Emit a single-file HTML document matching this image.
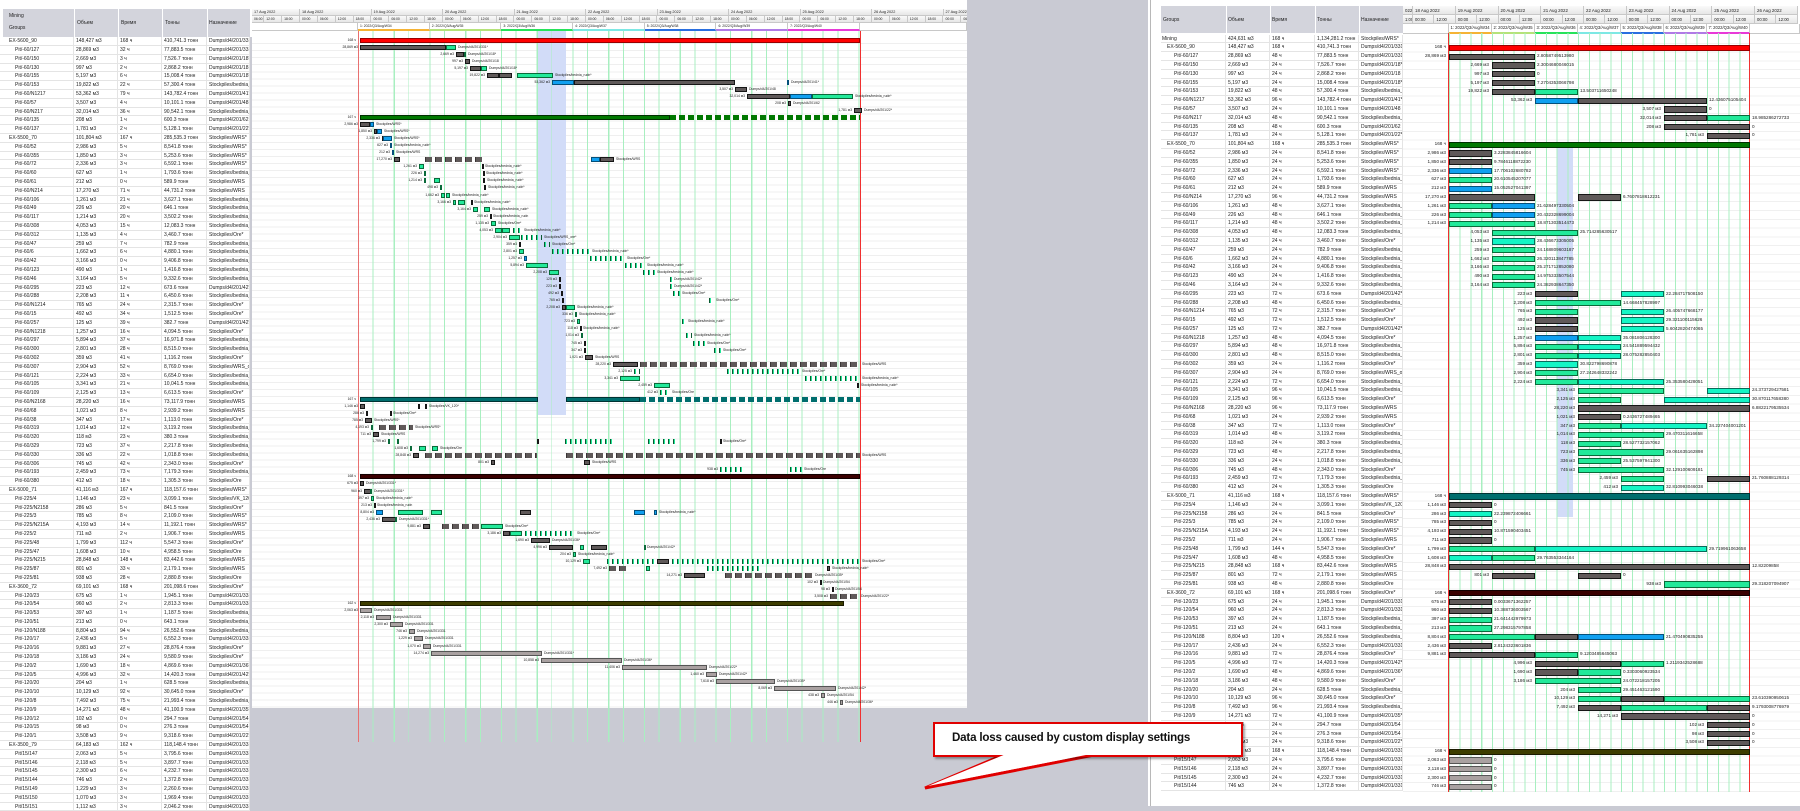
<!DOCTYPE html>
<html><head><meta charset="utf-8">
<style>
body{margin:0;width:1800px;height:806px;background:#c9cad3;position:relative;overflow:hidden;font-family:"Liberation Sans","Noto Sans CJK SC",sans-serif;font-size:5px;color:#222}
.a{position:absolute}
i{font-style:normal}
.lt{position:absolute;left:0;top:37.3px;width:250px;background:#fff}
.lt>div{display:grid;grid-template-columns:74px 44px 44px 45px 43px;height:8.8px;box-sizing:border-box;border-bottom:1px solid #e4e4e4}
.lt i,.rt .t i{line-height:8px;padding-left:2px;border-right:1px solid #e4e4e4;overflow:hidden;white-space:nowrap}
.lt i:first-child{padding-left:15px}
.lt .gr i:first-child{padding-left:9px}
.rt{position:absolute;left:0;top:34.6px;width:1800px}
.rt>div{position:relative;height:8.8px}
.rt .t{position:absolute;left:1161px;top:0;width:242px;height:8.8px;display:grid;grid-template-columns:65px 44px 45px 44px 44px;box-sizing:border-box;border-bottom:1px solid #e4e4e4;background:#fff}
.rt .t i:first-child{padding-left:13px}
.rt .gr .t i:first-child{padding-left:6px}
.rt .m .t i:first-child{padding-left:1px}
b{position:absolute;box-sizing:border-box;border:1px solid #161616}
.rt b{top:1.4px;height:6.2px}
.lg{position:absolute;left:0;top:36.5px;width:967px;height:672px;overflow:hidden}
.lg>div{position:relative;height:7.06px}
.lg b{top:1px;height:5px}
.v{position:absolute;transform:translateX(-100%);white-space:nowrap;top:0}
.n{position:absolute;white-space:nowrap;top:0}
.lg .v,.lg .n{font-size:3.4px;line-height:7px}
.rt .v,.rt .n{font-size:4.6px;line-height:8.8px}
.R{background:#f00;border-color:#900}
.G{background:#007800;border-color:#003000}
.T{background:#006e6e;border-color:#003333}
.M{background:#3a0000;border-color:#100}
.O{background:#3d3d00;border-color:#1a1a00}
.k{background:#5f5959}
.g{background:#22e99a;border-color:#0a6a3a}
.c{background:#14f5c5;border-color:#0a6a5a}
.u{background:#10a0f0;border-color:#05507a}
.l{background:#a9a1a1;border-color:#555}
.d{background:repeating-linear-gradient(90deg,#0a5a30 0 1px,#22e99a 1px 2px,transparent 2px 5px);border:none}
.sk{background:repeating-linear-gradient(90deg,#3a3535 0 1px,#5f5959 1px 7px,transparent 7px 10px);border:none}
.Gd{background:repeating-linear-gradient(90deg,#007800 0 6px,transparent 6px 9px);border:none}
.Td{background:repeating-linear-gradient(90deg,#006e6e 0 6px,transparent 6px 9px);border:none}
.hd{background:#d3d4dc}
.cells{display:flex;position:absolute;white-space:nowrap;overflow:hidden}
.cells span{flex:none;box-sizing:border-box;border-right:1px solid #c8c8c8;border-bottom:1px solid #c8c8c8;padding-left:2px;background:linear-gradient(#fafafa,#e6e6e6);overflow:hidden}
.wk span{background:#fff}
</style></head><body>

<div class="a" style="left:0;top:0;width:967px;height:9px;background:#fff"></div>
<div class="a" style="left:0;top:9px;width:252px;height:28.3px;background:#fff"></div>
<div class="a hd" style="left:3px;top:9px;width:247px;height:28px"></div>
<div class="a" style="left:9px;top:13px">Mining</div>
<div class="a" style="left:9px;top:25px">Groups</div>
<div class="a" style="left:77px;top:20px">Объем</div>
<div class="a" style="left:121px;top:20px">Время</div>
<div class="a" style="left:165px;top:20px">Тонны</div>
<div class="a" style="left:209px;top:20px">Назначение</div>
<div class="a" style="left:74px;top:9px;width:1px;height:28px;background:#fff"></div>
<div class="a" style="left:118px;top:9px;width:1px;height:28px;background:#fff"></div>
<div class="a" style="left:162px;top:9px;width:1px;height:28px;background:#fff"></div>
<div class="a" style="left:207px;top:9px;width:1px;height:28px;background:#fff"></div>

<div class="a" style="left:252px;top:31px;width:715px;height:677px;background:#fff"></div>
<div class="a" style="left:252px;top:36.5px;width:715px;height:671px;background:repeating-linear-gradient(180deg,transparent 0 6.06px,#efefef 6.06px 7.06px)"></div>

<div class="cells" style="left:252px;top:9px;width:715px;height:7px;line-height:7px;font-size:3.8px">
<span style="width:48px">17 Aug 2022</span><span style="width:71.5px">18 Aug 2022</span><span style="width:71.5px">19 Aug 2022</span><span style="width:71.5px">20 Aug 2022</span><span style="width:71.5px">21 Aug 2022</span><span style="width:71.5px">22 Aug 2022</span><span style="width:71.5px">23 Aug 2022</span><span style="width:71.5px">24 Aug 2022</span><span style="width:71.5px">25 Aug 2022</span><span style="width:71.5px">26 Aug 2022</span><span style="width:71.5px">27 Aug 2022</span></div>
<div class="cells" style="left:252px;top:16px;width:715px;height:7px;line-height:7px;font-size:3.4px">
<span style="width:12.2px">06:00</span><span style="width:17.875px">12:00</span><span style="width:17.875px">18:00</span><span style="width:17.875px">00:00</span><span style="width:17.875px">06:00</span><span style="width:17.875px">12:00</span><span style="width:17.875px">18:00</span><span style="width:17.875px">00:00</span><span style="width:17.875px">06:00</span><span style="width:17.875px">12:00</span><span style="width:17.875px">18:00</span><span style="width:17.875px">00:00</span><span style="width:17.875px">06:00</span><span style="width:17.875px">12:00</span><span style="width:17.875px">18:00</span><span style="width:17.875px">00:00</span><span style="width:17.875px">06:00</span><span style="width:17.875px">12:00</span><span style="width:17.875px">18:00</span><span style="width:17.875px">00:00</span><span style="width:17.875px">06:00</span><span style="width:17.875px">12:00</span><span style="width:17.875px">18:00</span><span style="width:17.875px">00:00</span><span style="width:17.875px">06:00</span><span style="width:17.875px">12:00</span><span style="width:17.875px">18:00</span><span style="width:17.875px">00:00</span><span style="width:17.875px">06:00</span><span style="width:17.875px">12:00</span><span style="width:17.875px">18:00</span><span style="width:17.875px">00:00</span><span style="width:17.875px">06:00</span><span style="width:17.875px">12:00</span><span style="width:17.875px">18:00</span><span style="width:17.875px">00:00</span><span style="width:17.875px">06:00</span><span style="width:17.875px">12:00</span><span style="width:17.875px">18:00</span><span style="width:17.875px">00:00</span><span style="width:17.875px">06:00</span></div>
<div class="cells wk" style="left:252px;top:23px;width:715px;height:8px;line-height:6px;font-size:3.4px">
<span style="width:106px"></span><span style="width:71.7px;border-bottom:2px solid #f5b335">1: 2022/Q3/Aug/W34</span><span style="width:71.7px;border-bottom:2px solid #b5e37a">2: 2022/Q3/Aug/W35</span><span style="width:71.7px;border-bottom:2px solid #27e35a">3: 2022/Q3/Aug/W36</span><span style="width:71.7px;border-bottom:2px solid #7de8e4">4: 2022/Q3/Aug/W37</span><span style="width:71.7px;border-bottom:2px solid #2a6fe0">5: 2022/Q3/Aug/W38</span><span style="width:71.7px;border-bottom:2px solid #b07be6">6: 2022/Q3/Aug/W39</span><span style="width:71.7px;border-bottom:2px solid #e83ad8">7: 2022/Q3/Aug/W40</span><span style="width:107px"></span></div>

<div class="a" style="left:538px;top:31px;width:28px;height:384px;background:#d2dcf8"></div>
<div class="a" style="left:358px;top:31px;width:503px;height:711px;background:repeating-linear-gradient(90deg,#a8efc0 0 1px,transparent 1px 14.5px,#a8efc0 14.5px 15.5px,transparent 15.5px 35.75px)"></div>
<div class="a" style="left:357.5px;top:31px;width:1px;height:711px;background:#e87070"></div>
<div class="a" style="left:859.5px;top:31px;width:1px;height:711px;background:#f03030"></div>

<div class="lt">
<div class="gr"><i>EX-5600_90</i><i>148,427 м3</i><i>168 ч</i><i>410,741.3 тонн</i><i>Dumps/d4/201/331</i></div>
<div><i>Pit/-60/127</i><i>28,869 м3</i><i>32 ч</i><i>77,883.5 тонн</i><i>Dumps/d4/201/331</i></div>
<div><i>Pit/-60/150</i><i>2,669 м3</i><i>3 ч</i><i>7,526.7 тонн</i><i>Dumps/d4/201/18*</i></div>
<div><i>Pit/-60/130</i><i>997 м3</i><i>2 ч</i><i>2,868.2 тонн</i><i>Dumps/d4/201/18</i></div>
<div><i>Pit/-60/155</i><i>5,197 м3</i><i>6 ч</i><i>15,008.4 тонн</i><i>Dumps/d4/201/18*</i></div>
<div><i>Pit/-60/153</i><i>19,822 м3</i><i>22 ч</i><i>57,300.4 тонн</i><i>Stockpiles/bednia_r</i></div>
<div><i>Pit/-60/N1217</i><i>53,362 м3</i><i>79 ч</i><i>143,782.4 тонн</i><i>Dumps/d4/201/41*</i></div>
<div><i>Pit/-60/57</i><i>3,507 м3</i><i>4 ч</i><i>10,101.1 тонн</i><i>Dumps/d4/201/48</i></div>
<div><i>Pit/-60/N217</i><i>32,014 м3</i><i>36 ч</i><i>90,542.1 тонн</i><i>Stockpiles/bednia_r</i></div>
<div><i>Pit/-60/135</i><i>208 м3</i><i>1 ч</i><i>600.3 тонн</i><i>Dumps/d4/201/62</i></div>
<div><i>Pit/-60/137</i><i>1,781 м3</i><i>2 ч</i><i>5,128.1 тонн</i><i>Dumps/d4/201/22*</i></div>
<div class="gr"><i>EX-5500_70</i><i>101,804 м3</i><i>167 ч</i><i>285,535.3 тонн</i><i>Stockpiles/WRS*</i></div>
<div><i>Pit/-60/52</i><i>2,986 м3</i><i>5 ч</i><i>8,541.8 тонн</i><i>Stockpiles/WRS*</i></div>
<div><i>Pit/-60/355</i><i>1,850 м3</i><i>3 ч</i><i>5,253.6 тонн</i><i>Stockpiles/WRS*</i></div>
<div><i>Pit/-60/72</i><i>2,336 м3</i><i>3 ч</i><i>6,592.1 тонн</i><i>Stockpiles/WRS*</i></div>
<div><i>Pit/-60/60</i><i>627 м3</i><i>1 ч</i><i>1,793.6 тонн</i><i>Stockpiles/bednia_r</i></div>
<div><i>Pit/-60/61</i><i>212 м3</i><i>0 ч</i><i>589.9 тонн</i><i>Stockpiles/WRS</i></div>
<div><i>Pit/-60/N214</i><i>17,270 м3</i><i>71 ч</i><i>44,731.2 тонн</i><i>Stockpiles/WRS</i></div>
<div><i>Pit/-60/106</i><i>1,261 м3</i><i>21 ч</i><i>3,627.1 тонн</i><i>Stockpiles/bednia_r</i></div>
<div><i>Pit/-60/49</i><i>226 м3</i><i>20 ч</i><i>646.1 тонн</i><i>Stockpiles/bednia_r</i></div>
<div><i>Pit/-60/117</i><i>1,214 м3</i><i>20 ч</i><i>3,502.2 тонн</i><i>Stockpiles/bednia_r</i></div>
<div><i>Pit/-60/308</i><i>4,053 м3</i><i>15 ч</i><i>12,083.3 тонн</i><i>Stockpiles/bednia_r</i></div>
<div><i>Pit/-60/312</i><i>1,135 м3</i><i>4 ч</i><i>3,460.7 тонн</i><i>Stockpiles/Ore*</i></div>
<div><i>Pit/-60/47</i><i>259 м3</i><i>7 ч</i><i>782.9 тонн</i><i>Stockpiles/bednia_r</i></div>
<div><i>Pit/-60/6</i><i>1,662 м3</i><i>6 ч</i><i>4,880.1 тонн</i><i>Stockpiles/bednia_r</i></div>
<div><i>Pit/-60/42</i><i>3,166 м3</i><i>0 ч</i><i>9,406.8 тонн</i><i>Stockpiles/bednia_r</i></div>
<div><i>Pit/-60/123</i><i>490 м3</i><i>1 ч</i><i>1,416.8 тонн</i><i>Stockpiles/bednia_r</i></div>
<div><i>Pit/-60/46</i><i>3,164 м3</i><i>5 ч</i><i>9,332.6 тонн</i><i>Stockpiles/bednia_r</i></div>
<div><i>Pit/-60/295</i><i>223 м3</i><i>12 ч</i><i>673.6 тонн</i><i>Dumps/d4/201/42*</i></div>
<div><i>Pit/-60/288</i><i>2,208 м3</i><i>11 ч</i><i>6,450.6 тонн</i><i>Stockpiles/bednia_r</i></div>
<div><i>Pit/-60/N1214</i><i>765 м3</i><i>24 ч</i><i>2,315.7 тонн</i><i>Stockpiles/Ore*</i></div>
<div><i>Pit/-60/15</i><i>492 м3</i><i>34 ч</i><i>1,512.5 тонн</i><i>Stockpiles/Ore*</i></div>
<div><i>Pit/-60/257</i><i>125 м3</i><i>39 ч</i><i>382.7 тонн</i><i>Dumps/d4/201/42*</i></div>
<div><i>Pit/-60/N1218</i><i>1,257 м3</i><i>16 ч</i><i>4,094.5 тонн</i><i>Stockpiles/Ore*</i></div>
<div><i>Pit/-60/297</i><i>5,894 м3</i><i>37 ч</i><i>16,971.8 тонн</i><i>Stockpiles/bednia_r</i></div>
<div><i>Pit/-60/300</i><i>2,801 м3</i><i>28 ч</i><i>8,515.0 тонн</i><i>Stockpiles/bednia_r</i></div>
<div><i>Pit/-60/302</i><i>359 м3</i><i>41 ч</i><i>1,116.2 тонн</i><i>Stockpiles/Ore*</i></div>
<div><i>Pit/-60/307</i><i>2,904 м3</i><i>52 ч</i><i>8,769.0 тонн</i><i>Stockpiles/WRS_ore</i></div>
<div><i>Pit/-60/121</i><i>2,224 м3</i><i>33 ч</i><i>6,654.0 тонн</i><i>Stockpiles/bednia_r</i></div>
<div><i>Pit/-60/105</i><i>3,341 м3</i><i>21 ч</i><i>10,041.5 тонн</i><i>Stockpiles/bednia_r</i></div>
<div><i>Pit/-60/109</i><i>2,125 м3</i><i>13 ч</i><i>6,613.5 тонн</i><i>Stockpiles/Ore*</i></div>
<div><i>Pit/-60/N2168</i><i>28,220 м3</i><i>16 ч</i><i>73,117.9 тонн</i><i>Stockpiles/WRS</i></div>
<div><i>Pit/-60/68</i><i>1,021 м3</i><i>8 ч</i><i>2,939.2 тонн</i><i>Stockpiles/WRS</i></div>
<div><i>Pit/-60/38</i><i>347 м3</i><i>17 ч</i><i>1,113.0 тонн</i><i>Stockpiles/Ore*</i></div>
<div><i>Pit/-60/319</i><i>1,014 м3</i><i>12 ч</i><i>3,119.2 тонн</i><i>Stockpiles/bednia_r</i></div>
<div><i>Pit/-60/320</i><i>118 м3</i><i>23 ч</i><i>380.3 тонн</i><i>Stockpiles/bednia_r</i></div>
<div><i>Pit/-60/329</i><i>723 м3</i><i>37 ч</i><i>2,217.8 тонн</i><i>Stockpiles/bednia_r</i></div>
<div><i>Pit/-60/330</i><i>336 м3</i><i>22 ч</i><i>1,018.8 тонн</i><i>Stockpiles/bednia_r</i></div>
<div><i>Pit/-60/306</i><i>745 м3</i><i>42 ч</i><i>2,343.0 тонн</i><i>Stockpiles/Ore*</i></div>
<div><i>Pit/-60/193</i><i>2,459 м3</i><i>73 ч</i><i>7,179.3 тонн</i><i>Stockpiles/bednia_r</i></div>
<div><i>Pit/-60/380</i><i>412 м3</i><i>18 ч</i><i>1,305.3 тонн</i><i>Stockpiles/Ore</i></div>
<div class="gr"><i>EX-5000_71</i><i>41,116 м3</i><i>167 ч</i><i>118,157.6 тонн</i><i>Stockpiles/WRS*</i></div>
<div><i>Pit/-225/4</i><i>1,146 м3</i><i>23 ч</i><i>3,099.1 тонн</i><i>Stockpiles/VK_120*</i></div>
<div><i>Pit/-225/N2158</i><i>286 м3</i><i>5 ч</i><i>841.5 тонн</i><i>Stockpiles/Ore*</i></div>
<div><i>Pit/-225/3</i><i>785 м3</i><i>8 ч</i><i>2,109.0 тонн</i><i>Stockpiles/WRS*</i></div>
<div><i>Pit/-225/N215A</i><i>4,193 м3</i><i>14 ч</i><i>11,192.1 тонн</i><i>Stockpiles/WRS*</i></div>
<div><i>Pit/-225/2</i><i>711 м3</i><i>2 ч</i><i>1,906.7 тонн</i><i>Stockpiles/WRS</i></div>
<div><i>Pit/-225/48</i><i>1,799 м3</i><i>112 ч</i><i>5,547.3 тонн</i><i>Stockpiles/Ore*</i></div>
<div><i>Pit/-225/47</i><i>1,608 м3</i><i>10 ч</i><i>4,958.5 тонн</i><i>Stockpiles/Ore</i></div>
<div><i>Pit/-225/N215</i><i>28,848 м3</i><i>148 ч</i><i>83,442.6 тонн</i><i>Stockpiles/WRS</i></div>
<div><i>Pit/-225/87</i><i>801 м3</i><i>33 ч</i><i>2,179.1 тонн</i><i>Stockpiles/WRS</i></div>
<div><i>Pit/-225/81</i><i>938 м3</i><i>28 ч</i><i>2,880.8 тонн</i><i>Stockpiles/Ore</i></div>
<div class="gr"><i>EX-3600_72</i><i>69,101 м3</i><i>168 ч</i><i>201,098.6 тонн</i><i>Stockpiles/Ore*</i></div>
<div><i>Pit/-120/23</i><i>675 м3</i><i>1 ч</i><i>1,945.1 тонн</i><i>Dumps/d4/201/331</i></div>
<div><i>Pit/-120/54</i><i>960 м3</i><i>2 ч</i><i>2,813.3 тонн</i><i>Dumps/d4/201/331</i></div>
<div><i>Pit/-120/53</i><i>397 м3</i><i>1 ч</i><i>1,187.5 тонн</i><i>Stockpiles/bednia_r</i></div>
<div><i>Pit/-120/51</i><i>213 м3</i><i>0 ч</i><i>643.1 тонн</i><i>Stockpiles/bednia_r</i></div>
<div><i>Pit/-120/N188</i><i>8,804 м3</i><i>94 ч</i><i>26,552.6 тонн</i><i>Stockpiles/bednia_r</i></div>
<div><i>Pit/-120/17</i><i>2,436 м3</i><i>5 ч</i><i>6,552.3 тонн</i><i>Dumps/d4/201/331</i></div>
<div><i>Pit/-120/16</i><i>9,881 м3</i><i>27 ч</i><i>28,876.4 тонн</i><i>Stockpiles/Ore*</i></div>
<div><i>Pit/-120/18</i><i>3,186 м3</i><i>24 ч</i><i>9,580.9 тонн</i><i>Stockpiles/Ore*</i></div>
<div><i>Pit/-120/2</i><i>1,690 м3</i><i>18 ч</i><i>4,869.6 тонн</i><i>Dumps/d4/201/36*</i></div>
<div><i>Pit/-120/5</i><i>4,996 м3</i><i>32 ч</i><i>14,420.3 тонн</i><i>Dumps/d4/201/42*</i></div>
<div><i>Pit/-120/20</i><i>204 м3</i><i>1 ч</i><i>628.5 тонн</i><i>Stockpiles/bednia_r</i></div>
<div><i>Pit/-120/10</i><i>10,129 м3</i><i>92 ч</i><i>30,645.0 тонн</i><i>Stockpiles/Ore*</i></div>
<div><i>Pit/-120/8</i><i>7,492 м3</i><i>75 ч</i><i>21,993.4 тонн</i><i>Stockpiles/bednia_r</i></div>
<div><i>Pit/-120/9</i><i>14,271 м3</i><i>48 ч</i><i>41,100.9 тонн</i><i>Dumps/d4/201/35*</i></div>
<div><i>Pit/-120/12</i><i>102 м3</i><i>0 ч</i><i>294.7 тонн</i><i>Dumps/d4/201/54</i></div>
<div><i>Pit/-120/15</i><i>98 м3</i><i>0 ч</i><i>276.3 тонн</i><i>Dumps/d4/201/54</i></div>
<div><i>Pit/-120/1</i><i>3,508 м3</i><i>9 ч</i><i>9,318.6 тонн</i><i>Dumps/d4/201/22*</i></div>
<div class="gr"><i>EX-3500_79</i><i>64,183 м3</i><i>162 ч</i><i>118,148.4 тонн</i><i>Dumps/d4/201/331</i></div>
<div><i>Pit/15/147</i><i>2,063 м3</i><i>5 ч</i><i>3,795.6 тонн</i><i>Dumps/d4/201/331</i></div>
<div><i>Pit/15/146</i><i>2,118 м3</i><i>5 ч</i><i>3,897.7 тонн</i><i>Dumps/d4/201/331</i></div>
<div><i>Pit/15/145</i><i>2,300 м3</i><i>6 ч</i><i>4,232.7 тонн</i><i>Dumps/d4/201/331</i></div>
<div><i>Pit/15/144</i><i>746 м3</i><i>2 ч</i><i>1,372.8 тонн</i><i>Dumps/d4/201/331</i></div>
<div><i>Pit/15/149</i><i>1,229 м3</i><i>3 ч</i><i>2,260.6 тонн</i><i>Dumps/d4/201/331</i></div>
<div><i>Pit/15/150</i><i>1,070 м3</i><i>3 ч</i><i>1,969.4 тонн</i><i>Dumps/d4/201/331</i></div>
<div><i>Pit/15/151</i><i>1,112 м3</i><i>3 ч</i><i>2,046.2 тонн</i><i>Dumps/d4/201/331</i></div>
</div>

<div class="lg">
<div><span class="v" style="left:356px">168 ч</span><b class="R" style="left:360px;width:500px"></b></div>
<div><span class="v" style="left:358px">28,869 м3</span><b class="k" style="left:360px;width:86px"></b><b class="g" style="left:446px;width:10px"></b><span class="n" style="left:458px">Dumps/d4/201/331*</span></div>
<div><span class="v" style="left:454px">2,669 м3</span><b class="k" style="left:456px;width:8px"></b><b class="g" style="left:464px;width:2px"></b><span class="n" style="left:468px">Dumps/d4/201/18*</span></div>
<div><span class="v" style="left:463px">997 м3</span><b class="k" style="left:465px;width:5px"></b><span class="n" style="left:472px">Dumps/d4/201/18</span></div>
<div><span class="v" style="left:468px">5,197 м3</span><b class="k" style="left:470px;width:11px"></b><b class="g" style="left:481px;width:6px"></b><span class="n" style="left:489px">Dumps/d4/201/18*</span></div>
<div><span class="v" style="left:485px">19,822 м3</span><b class="k" style="left:487px;width:12px"></b><b class="k" style="left:499px;width:13px"></b><b class="g" style="left:517px;width:36px"></b><span class="n" style="left:555px">Stockpiles/bednia_rudn*</span></div>
<div><span class="v" style="left:550px">53,362 м3</span><b class="u" style="left:552px;width:22px"></b><b class="k" style="left:574px;width:161px"></b><b class="u" style="left:787px;width:2px"></b><span class="n" style="left:791px">Dumps/d4/201/41*</span></div>
<div><span class="v" style="left:733px">3,507 м3</span><b class="k" style="left:735px;width:12px"></b><span class="n" style="left:749px">Dumps/d4/201/48</span></div>
<div><span class="v" style="left:745px">32,014 м3</span><b class="k" style="left:747px;width:43px"></b><b class="u" style="left:790px;width:22px"></b><b class="g" style="left:812px;width:41px"></b><span class="n" style="left:855px">Stockpiles/bednia_rudn*</span></div>
<div><span class="v" style="left:786px">208 м3</span><b class="k" style="left:788px;width:3px"></b><span class="n" style="left:793px">Dumps/d4/201/62</span></div>
<div><span class="v" style="left:852px">1,781 м3</span><b class="k" style="left:854px;width:8px"></b><span class="n" style="left:864px">Dumps/d4/201/22*</span></div>
<div><span class="v" style="left:356px">167 ч</span><b class="G" style="left:360px;width:310px"></b><b class="Gd" style="left:670px;width:190px"></b></div>
<div><span class="v" style="left:358px">2,986 м3</span><b class="k" style="left:360px;width:10px"></b><b class="u" style="left:370px;width:4px"></b><span class="n" style="left:376px">Stockpiles/WRS*</span></div>
<div><span class="v" style="left:372px">1,850 м3</span><b class="k" style="left:374px;width:3px"></b><b class="u" style="left:377px;width:5px"></b><span class="n" style="left:384px">Stockpiles/WRS*</span></div>
<div><span class="v" style="left:380px">2,336 м3</span><b class="k" style="left:382px;width:2px"></b><b class="u" style="left:383px;width:9px"></b><span class="n" style="left:394px">Stockpiles/WRS*</span></div>
<div><span class="v" style="left:388px">627 м3</span><b class="u" style="left:390px;width:2px"></b><span class="n" style="left:394px">Stockpiles/bednia_rudn*</span></div>
<div><span class="v" style="left:390px">212 м3</span><b class="u" style="left:392px;width:2px"></b><span class="n" style="left:396px">Stockpiles/WRS</span></div>
<div><span class="v" style="left:392px">17,270 м3</span><b class="k" style="left:394px;width:6px"></b><b class="sk" style="left:425px;width:57px"></b><b class="u" style="left:591px;width:9px"></b><b class="k" style="left:600px;width:14px"></b><span class="n" style="left:616px">Stockpiles/WRS</span></div>
<div><span class="v" style="left:417px">1,261 м3</span><b class="g" style="left:419px;width:5px"></b><b class="k" style="left:482px;width:1px"></b><span class="n" style="left:485px">Stockpiles/bednia_rudn*</span></div>
<div><span class="v" style="left:422px">226 м3</span><b class="g" style="left:424px;width:2px"></b><b class="k" style="left:483px;width:1px"></b><span class="n" style="left:486px">Stockpiles/bednia_rudn*</span></div>
<div><span class="v" style="left:422px">1,214 м3</span><b class="g" style="left:424px;width:2px"></b><b class="g" style="left:434px;width:6px"></b><b class="k" style="left:483px;width:2px"></b><span class="n" style="left:487px">Stockpiles/bednia_rudn*</span></div>
<div><span class="v" style="left:438px">498 м3</span><b class="g" style="left:440px;width:2px"></b><b class="k" style="left:484px;width:2px"></b><span class="n" style="left:488px">Stockpiles/bednia_rudn*</span></div>
<div><span class="v" style="left:439px">1,662 м3</span><b class="g" style="left:441px;width:4px"></b><b class="g" style="left:446px;width:4px"></b><span class="n" style="left:452px">Stockpiles/bednia_rudn*</span></div>
<div><span class="v" style="left:451px">3,166 м3</span><b class="g" style="left:453px;width:3px"></b><b class="g" style="left:458px;width:7px"></b><b class="k" style="left:471px;width:1px"></b><span class="n" style="left:474px">Stockpiles/bednia_rudn*</span></div>
<div><span class="v" style="left:471px">3,164 м3</span><b class="g" style="left:473px;width:5px"></b><b class="g" style="left:484px;width:6px"></b><span class="n" style="left:492px">Stockpiles/bednia_rudn*</span></div>
<div><span class="v" style="left:488px">259 м3</span><b class="k" style="left:490px;width:1px"></b><span class="n" style="left:493px">Stockpiles/bednia_rudn</span></div>
<div><span class="v" style="left:489px">1,135 м3</span><b class="g" style="left:491px;width:5px"></b><span class="n" style="left:498px">Stockpiles/Ore*</span></div>
<div><span class="v" style="left:493px">4,053 м3</span><b class="g" style="left:495px;width:7px"></b><b class="g" style="left:502px;width:8px"></b><b class="d" style="left:513px;width:9px"></b><span class="n" style="left:524px">Stockpiles/bednia_rudn*</span></div>
<div><span class="v" style="left:507px">2,904 м3</span><b class="g" style="left:509px;width:11px"></b><b class="d" style="left:521px;width:21px"></b><span class="n" style="left:544px">Stockpiles/WRS_ore*</span></div>
<div><span class="v" style="left:517px">359 м3</span><b class="k" style="left:519px;width:1px"></b><b class="d" style="left:544px;width:6px"></b><span class="n" style="left:552px">Stockpiles/Ore*</span></div>
<div><span class="v" style="left:517px">2,801 м3</span><b class="g" style="left:519px;width:5px"></b><b class="d" style="left:552px;width:38px"></b><span class="n" style="left:592px">Stockpiles/bednia_rudn*</span></div>
<div><span class="v" style="left:522px">1,257 м3</span><b class="u" style="left:524px;width:3px"></b><b class="d" style="left:590px;width:35px"></b><span class="n" style="left:627px">Stockpiles/Ore*</span></div>
<div><span class="v" style="left:524px">5,894 м3</span><b class="g" style="left:526px;width:22px"></b><b class="d" style="left:625px;width:20px"></b><span class="n" style="left:647px">Stockpiles/bednia_rudn*</span></div>
<div><span class="v" style="left:547px">2,208 м3</span><b class="g" style="left:549px;width:10px"></b><b class="d" style="left:643px;width:12px"></b><span class="n" style="left:657px">Stockpiles/bednia_rudn*</span></div>
<div><span class="v" style="left:557px">125 м3</span><b class="k" style="left:559px;width:1px"></b><b class="d" style="left:670px;width:2px"></b><span class="n" style="left:674px">Dumps/d4/201/42*</span></div>
<div><span class="v" style="left:557px">223 м3</span><b class="k" style="left:559px;width:1px"></b><b class="d" style="left:670px;width:2px"></b><span class="n" style="left:674px">Dumps/d4/201/42*</span></div>
<div><span class="v" style="left:559px">492 м3</span><b class="k" style="left:561px;width:1px"></b><b class="d" style="left:673px;width:7px"></b><span class="n" style="left:682px">Stockpiles/Ore*</span></div>
<div><span class="v" style="left:560px">765 м3</span><b class="k" style="left:562px;width:1px"></b><b class="d" style="left:709px;width:5px"></b><span class="n" style="left:716px">Stockpiles/Ore*</span></div>
<div><span class="v" style="left:560px">2,208 м3</span><b class="k" style="left:562px;width:4px"></b><b class="g" style="left:566px;width:9px"></b><span class="n" style="left:577px">Stockpiles/bednia_rudn*</span></div>
<div><span class="v" style="left:573px">336 м3</span><b class="g" style="left:575px;width:2px"></b><span class="n" style="left:579px">Stockpiles/bednia_rudn*</span></div>
<div><span class="v" style="left:575px">723 м3</span><b class="g" style="left:577px;width:3px"></b><b class="d" style="left:682px;width:4px"></b><span class="n" style="left:688px">Stockpiles/bednia_rudn*</span></div>
<div><span class="v" style="left:578px">118 м3</span><b class="k" style="left:580px;width:1px"></b><span class="n" style="left:583px">Stockpiles/bednia_rudn*</span></div>
<div><span class="v" style="left:579px">1,014 м3</span><b class="g" style="left:581px;width:2px"></b><b class="d" style="left:686px;width:6px"></b><span class="n" style="left:694px">Stockpiles/bednia_rudn*</span></div>
<div><span class="v" style="left:582px">745 м3</span><b class="k" style="left:584px;width:1px"></b><b class="d" style="left:693px;width:12px"></b><span class="n" style="left:707px">Stockpiles/Ore*</span></div>
<div><span class="v" style="left:582px">347 м3</span><b class="k" style="left:584px;width:1px"></b><b class="d" style="left:714px;width:7px"></b><span class="n" style="left:723px">Stockpiles/Ore*</span></div>
<div><span class="v" style="left:583px">1,021 м3</span><b class="k" style="left:585px;width:8px"></b><span class="n" style="left:595px">Stockpiles/WRS</span></div>
<div><span class="v" style="left:611px">28,220 м3</span><b class="k" style="left:613px;width:25px"></b><b class="sk" style="left:640px;width:220px"></b><span class="n" style="left:862px">Stockpiles/WRS</span></div>
<div><span class="v" style="left:632px">2,125 м3</span><b class="d" style="left:634px;width:6px"></b><b class="d" style="left:727px;width:73px"></b><span class="n" style="left:802px">Stockpiles/Ore*</span></div>
<div><span class="v" style="left:618px">3,341 м3</span><b class="g" style="left:620px;width:20px"></b><b class="d" style="left:805px;width:55px"></b><span class="n" style="left:862px">Stockpiles/bednia_rudn*</span></div>
<div><span class="v" style="left:652px">2,459 м3</span><b class="g" style="left:654px;width:16px"></b><b class="k" style="left:857px;width:2px"></b><span class="n" style="left:861px">Stockpiles/bednia_rudn*</span></div>
<div><span class="v" style="left:658px">412 м3</span><b class="d" style="left:660px;width:10px"></b><span class="n" style="left:672px">Stockpiles/Ore</span></div>
<div><span class="v" style="left:356px">167 ч</span><b class="T" style="left:360px;width:178px"></b><b class="T" style="left:566px;width:74px"></b><b class="Td" style="left:640px;width:220px"></b></div>
<div><span class="v" style="left:358px">1,146 м3</span><b class="k" style="left:360px;width:5px"></b><b class="k" style="left:418px;width:1px"></b><b class="k" style="left:425px;width:1px"></b><span class="n" style="left:429px">Stockpiles/VK_120*</span></div>
<div><span class="v" style="left:364px">286 м3</span><b class="k" style="left:366px;width:1px"></b><b class="k" style="left:390px;width:1px"></b><span class="n" style="left:393px">Stockpiles/Ore*</span></div>
<div><span class="v" style="left:363px">785 м3</span><b class="k" style="left:365px;width:7px"></b><span class="n" style="left:374px">Stockpiles/WRS*</span></div>
<div><span class="v" style="left:369px">4,193 м3</span><b class="g" style="left:371px;width:2px"></b><b class="sk" style="left:379px;width:34px"></b><span class="n" style="left:415px">Stockpiles/WRS*</span></div>
<div><span class="v" style="left:371px">711 м3</span><b class="k" style="left:373px;width:6px"></b><span class="n" style="left:381px">Stockpiles/WRS</span></div>
<div><span class="v" style="left:386px">1,799 м3</span><b class="g" style="left:388px;width:2px"></b><b class="g" style="left:397px;width:2px"></b><b class="k" style="left:537px;width:1px"></b><b class="d" style="left:565px;width:47px"></b><b class="d" style="left:648px;width:29px"></b><b class="k" style="left:720px;width:1px"></b><span class="n" style="left:723px">Stockpiles/Ore*</span></div>
<div><span class="v" style="left:408px">1,608 м3</span><b class="g" style="left:410px;width:2px"></b><b class="g" style="left:419px;width:7px"></b><b class="g" style="left:432px;width:6px"></b><span class="n" style="left:440px">Stockpiles/Ore</span></div>
<div><span class="v" style="left:411px">28,848 м3</span><b class="k" style="left:413px;width:6px"></b><b class="sk" style="left:425px;width:112px"></b><b class="sk" style="left:566px;width:294px"></b><span class="n" style="left:862px">Stockpiles/WRS</span></div>
<div><span class="v" style="left:489px">801 м3</span><b class="k" style="left:491px;width:4px"></b><b class="k" style="left:584px;width:6px"></b><span class="n" style="left:592px">Stockpiles/WRS</span></div>
<div><span class="v" style="left:718px">938 м3</span><b class="d" style="left:720px;width:25px"></b><b class="d" style="left:790px;width:12px"></b><span class="n" style="left:804px">Stockpiles/Ore</span></div>
<div><span class="v" style="left:356px">168 ч</span><b class="M" style="left:360px;width:500px"></b></div>
<div><span class="v" style="left:358px">675 м3</span><b class="k" style="left:360px;width:4px"></b><span class="n" style="left:366px">Dumps/d4/201/331*</span></div>
<div><span class="v" style="left:362px">960 м3</span><b class="k" style="left:364px;width:7px"></b><b class="g" style="left:370px;width:2px"></b><span class="n" style="left:374px">Dumps/d4/201/331*</span></div>
<div><span class="v" style="left:369px">397 м3</span><b class="g" style="left:371px;width:3px"></b><span class="n" style="left:376px">Stockpiles/bednia_rudn*</span></div>
<div><span class="v" style="left:372px">213 м3</span><b class="k" style="left:374px;width:1px"></b><span class="n" style="left:377px">Stockpiles/bednia_rudn</span></div>
<div><span class="v" style="left:374px">8,804 м3</span><b class="u" style="left:376px;width:7px"></b><b class="g" style="left:398px;width:25px"></b><b class="g" style="left:431px;width:11px"></b><b class="k" style="left:520px;width:11px"></b><b class="u" style="left:634px;width:11px"></b><b class="u" style="left:654px;width:3px"></b><span class="n" style="left:659px">Stockpiles/bednia_rudn*</span></div>
<div><span class="v" style="left:380px">2,436 м3</span><b class="k" style="left:382px;width:14px"></b><b class="g" style="left:395px;width:2px"></b><span class="n" style="left:399px">Dumps/d4/201/331*</span></div>
<div><span class="v" style="left:421px">9,881 м3</span><b class="k" style="left:423px;width:7px"></b><b class="sk" style="left:442px;width:38px"></b><b class="g" style="left:481px;width:22px"></b><span class="n" style="left:505px">Stockpiles/Ore*</span></div>
<div><span class="v" style="left:501px">3,186 м3</span><b class="k" style="left:503px;width:7px"></b><b class="g" style="left:510px;width:12px"></b><b class="d" style="left:525px;width:50px"></b><span class="n" style="left:577px">Stockpiles/Ore*</span></div>
<div><span class="v" style="left:529px">1,690 м3</span><b class="k" style="left:531px;width:19px"></b><span class="n" style="left:552px">Dumps/d4/201/36*</span></div>
<div><span class="v" style="left:547px">4,996 м3</span><b class="k" style="left:549px;width:24px"></b><b class="g" style="left:580px;width:4px"></b><b class="k" style="left:591px;width:16px"></b><b class="g" style="left:644px;width:1px"></b><span class="n" style="left:647px">Dumps/d4/201/42*</span></div>
<div><span class="v" style="left:571px">204 м3</span><b class="g" style="left:573px;width:3px"></b><span class="n" style="left:578px">Stockpiles/bednia_rudn*</span></div>
<div><span class="v" style="left:581px">10,129 м3</span><b class="g" style="left:583px;width:7px"></b><b class="d" style="left:607px;width:253px"></b><b class="k" style="left:657px;width:12px"></b><span class="n" style="left:862px">Stockpiles/Ore*</span></div>
<div><span class="v" style="left:607px">7,492 м3</span><b class="sk" style="left:609px;width:20px"></b><b class="g" style="left:646px;width:4px"></b><b class="d" style="left:707px;width:53px"></b><b class="k" style="left:827px;width:3px"></b><span class="n" style="left:832px">Stockpiles/bednia_rudn*</span></div>
<div><span class="v" style="left:682px">14,271 м3</span><b class="k" style="left:684px;width:21px"></b><b class="sk" style="left:725px;width:88px"></b><span class="n" style="left:815px">Dumps/d4/201/35*</span></div>
<div><span class="v" style="left:818px">102 м3</span><b class="k" style="left:820px;width:1px"></b><span class="n" style="left:823px">Dumps/d4/201/54</span></div>
<div><span class="v" style="left:830px">98 м3</span><b class="k" style="left:832px;width:1px"></b><span class="n" style="left:835px">Dumps/d4/201/54</span></div>
<div><span class="v" style="left:828px">3,508 м3</span><b class="sk" style="left:830px;width:29px"></b><span class="n" style="left:861px">Dumps/d4/201/22*</span></div>
<div><span class="v" style="left:356px">162 ч</span><b class="O" style="left:360px;width:484px"></b></div>
<div><span class="v" style="left:358px">2,063 м3</span><b class="l" style="left:360px;width:12px"></b><span class="n" style="left:374px">Dumps/d4/201/331</span></div>
<div><span class="v" style="left:374px">2,118 м3</span><b class="l" style="left:376px;width:15px"></b><span class="n" style="left:393px">Dumps/d4/201/331</span></div>
<div><span class="v" style="left:388px">2,300 м3</span><b class="l" style="left:390px;width:13px"></b><span class="n" style="left:405px">Dumps/d4/201/331</span></div>
<div><span class="v" style="left:407px">746 м3</span><b class="l" style="left:409px;width:6px"></b><span class="n" style="left:417px">Dumps/d4/201/331</span></div>
<div><span class="v" style="left:412px">1,229 м3</span><b class="l" style="left:414px;width:9px"></b><span class="n" style="left:425px">Dumps/d4/201/331</span></div>
<div><span class="v" style="left:421px">1,070 м3</span><b class="l" style="left:423px;width:8px"></b><span class="n" style="left:433px">Dumps/d4/201/331</span></div>
<div><span class="v" style="left:429px">14,274 м3</span><b class="l" style="left:431px;width:111px"></b><span class="n" style="left:544px">Dumps/d4/201/331*</span></div>
<div><span class="v" style="left:539px">10,858 м3</span><b class="l" style="left:541px;width:81px"></b><span class="n" style="left:624px">Dumps/d4/201/36*</span></div>
<div><span class="v" style="left:620px">11,406 м3</span><b class="l" style="left:622px;width:85px"></b><span class="n" style="left:709px">Dumps/d4/201/22*</span></div>
<div><span class="v" style="left:704px">1,460 м3</span><b class="l" style="left:706px;width:11px"></b><span class="n" style="left:719px">Dumps/d4/201/42*</span></div>
<div><span class="v" style="left:714px">7,618 м3</span><b class="l" style="left:716px;width:59px"></b><span class="n" style="left:777px">Dumps/d4/201/35*</span></div>
<div><span class="v" style="left:772px">8,069 м3</span><b class="l" style="left:774px;width:62px"></b><span class="n" style="left:838px">Dumps/d4/201/42*</span></div>
<div><span class="v" style="left:819px">438 м3</span><b class="l" style="left:821px;width:4px"></b><span class="n" style="left:827px">Dumps/d4/201/54</span></div>
<div><span class="v" style="left:838px">446 м3</span><b class="l" style="left:840px;width:3px"></b><span class="n" style="left:845px">Dumps/d4/201/36*</span></div>
</div>

<div class="a" style="left:1148px;top:0;width:652px;height:806px;background:#fff"></div>
<div class="a" style="left:1150px;top:0;width:1px;height:806px;background:#b8b8b8"></div>
<div class="a hd" style="left:1161px;top:6px;width:242px;height:27px"></div>
<div class="a" style="left:1163px;top:17px">Groups</div>
<div class="a" style="left:1228px;top:17px">Объем</div>
<div class="a" style="left:1272px;top:17px">Время</div>
<div class="a" style="left:1317px;top:17px">Тонны</div>
<div class="a" style="left:1361px;top:17px">Назначение</div>
<div class="a" style="left:1226px;top:6px;width:1px;height:27px;background:#fff"></div>
<div class="a" style="left:1270px;top:6px;width:1px;height:27px;background:#fff"></div>
<div class="a" style="left:1315px;top:6px;width:1px;height:27px;background:#fff"></div>
<div class="a" style="left:1359px;top:6px;width:1px;height:27px;background:#fff"></div>

<div class="cells" style="left:1403px;top:6px;width:397px;height:9px;line-height:9px;font-size:4.4px">
<span style="width:10px">022</span><span style="width:42.75px">18 Aug 2022</span><span style="width:42.75px">19 Aug 2022</span><span style="width:42.75px">20 Aug 2022</span><span style="width:42.75px">21 Aug 2022</span><span style="width:42.75px">22 Aug 2022</span><span style="width:42.75px">23 Aug 2022</span><span style="width:42.75px">24 Aug 2022</span><span style="width:42.75px">25 Aug 2022</span><span style="width:42.75px">26 Aug 2022</span></div>
<div class="cells" style="left:1403px;top:15px;width:397px;height:9px;line-height:9px;font-size:4.2px">
<span style="width:10px">1:00</span><span style="width:21.375px">00:00</span><span style="width:21.375px">12:00</span><span style="width:21.375px">00:00</span><span style="width:21.375px">12:00</span><span style="width:21.375px">00:00</span><span style="width:21.375px">12:00</span><span style="width:21.375px">00:00</span><span style="width:21.375px">12:00</span><span style="width:21.375px">00:00</span><span style="width:21.375px">12:00</span><span style="width:21.375px">00:00</span><span style="width:21.375px">12:00</span><span style="width:21.375px">00:00</span><span style="width:21.375px">12:00</span><span style="width:21.375px">00:00</span><span style="width:21.375px">12:00</span><span style="width:21.375px">00:00</span><span style="width:21.375px">12:00</span></div>
<div class="cells wk" style="left:1403px;top:24px;width:397px;height:9.5px;line-height:8px;font-size:4.2px">
<span style="width:45.5px"></span><span style="width:43px;border-bottom:2px solid #f5b335">1: 2022/Q3/Aug/W34</span><span style="width:43px;border-bottom:2px solid #b5e37a">2: 2022/Q3/Aug/W35</span><span style="width:43px;border-bottom:2px solid #27e35a">3: 2022/Q3/Aug/W36</span><span style="width:43px;border-bottom:2px solid #7de8e4">4: 2022/Q3/Aug/W37</span><span style="width:43px;border-bottom:2px solid #2a6fe0">5: 2022/Q3/Aug/W38</span><span style="width:43px;border-bottom:2px solid #b07be6">6: 2022/Q3/Aug/W39</span><span style="width:43px;border-bottom:2px solid #e83ad8">7: 2022/Q3/Aug/W40</span><span style="width:50px"></span></div>

<div class="a" style="left:1403px;top:34.6px;width:397px;height:757px;background:repeating-linear-gradient(180deg,transparent 0 7.8px,#f0f0f0 7.8px 8.8px)"></div>
<div class="a" style="left:1557px;top:143px;width:16px;height:374px;background:#d2dcf8"></div>
<div class="a" style="left:1448.5px;top:33px;width:301px;height:759px;background:repeating-linear-gradient(90deg,#a8efc0 0 1px,transparent 1px 10.75px)"></div>
<div class="a" style="left:1448px;top:33px;width:1px;height:759px;background:#f03030"></div>
<div class="a" style="left:1749px;top:33px;width:1px;height:759px;background:#f03030"></div>

<div class="rt">
<div class="m"><div class="t"><i>Mining</i><i>424,631 м3</i><i>168 ч</i><i>1,134,281.2 тонн</i><i>Stockpiles/WRS*</i></div></div>
<div class="gr"><div class="t"><i>EX-5600_90</i><i>148,427 м3</i><i>168 ч</i><i>410,741.3 тонн</i><i>Dumps/d4/201/331</i></div><span class="v" style="left:1446px">168 ч</span><b class="R" style="left:1448.5px;width:301px"></b></div>
<div><div class="t"><i>Pit/-60/127</i><i>28,869 м3</i><i>48 ч</i><i>77,883.5 тонн</i><i>Dumps/d4/201/331</i></div><span class="v" style="left:1446px">28,869 м3</span><b class="k" style="left:1448.5px;width:86px"></b><span class="n" style="left:1537px">2.8058749513980</span></div>
<div><div class="t"><i>Pit/-60/150</i><i>2,669 м3</i><i>24 ч</i><i>7,526.7 тонн</i><i>Dumps/d4/201/18*</i></div><span class="v" style="left:1489px">2,669 м3</span><b class="k" style="left:1491.5px;width:43px"></b><span class="n" style="left:1537px">2.3004680046015</span></div>
<div><div class="t"><i>Pit/-60/130</i><i>997 м3</i><i>24 ч</i><i>2,868.2 тонн</i><i>Dumps/d4/201/18</i></div><span class="v" style="left:1489px">997 м3</span><b class="k" style="left:1491.5px;width:43px"></b><span class="n" style="left:1537px">0</span></div>
<div><div class="t"><i>Pit/-60/155</i><i>5,197 м3</i><i>24 ч</i><i>15,008.4 тонн</i><i>Dumps/d4/201/18*</i></div><span class="v" style="left:1489px">5,197 м3</span><b class="k" style="left:1491.5px;width:43px"></b><span class="n" style="left:1537px">7.2704353066798</span></div>
<div><div class="t"><i>Pit/-60/153</i><i>19,822 м3</i><i>48 ч</i><i>57,300.4 тонн</i><i>Stockpiles/bednia_r</i></div><span class="v" style="left:1489px">19,822 м3</span><b class="k" style="left:1491.5px;width:43px"></b><b class="g" style="left:1534.5px;width:43px"></b><span class="n" style="left:1580px">13.503711650248</span></div>
<div><div class="t"><i>Pit/-60/N1217</i><i>53,362 м3</i><i>96 ч</i><i>143,782.4 тонн</i><i>Dumps/d4/201/41*</i></div><span class="v" style="left:1532px">53,362 м3</span><b class="u" style="left:1534.5px;width:43px"></b><b class="k" style="left:1577.5px;width:129px"></b><span class="n" style="left:1709px">12.436075105404</span></div>
<div><div class="t"><i>Pit/-60/57</i><i>3,507 м3</i><i>24 ч</i><i>10,101.1 тонн</i><i>Dumps/d4/201/48</i></div><span class="v" style="left:1661px">3,507 м3</span><b class="k" style="left:1663.5px;width:43px"></b><span class="n" style="left:1709px">0</span></div>
<div><div class="t"><i>Pit/-60/N217</i><i>32,014 м3</i><i>48 ч</i><i>90,542.1 тонн</i><i>Stockpiles/bednia_r</i></div><span class="v" style="left:1661px">32,014 м3</span><b class="k" style="left:1663.5px;width:43px"></b><b class="g" style="left:1706.5px;width:43px"></b><span class="n" style="left:1752px">18.985286272733</span></div>
<div><div class="t"><i>Pit/-60/135</i><i>208 м3</i><i>48 ч</i><i>600.3 тонн</i><i>Dumps/d4/201/62</i></div><span class="v" style="left:1661px">208 м3</span><b class="k" style="left:1663.5px;width:86px"></b><span class="n" style="left:1752px">0</span></div>
<div><div class="t"><i>Pit/-60/137</i><i>1,781 м3</i><i>24 ч</i><i>5,128.1 тонн</i><i>Dumps/d4/201/22*</i></div><span class="v" style="left:1704px">1,781 м3</span><b class="k" style="left:1706.5px;width:43px"></b><span class="n" style="left:1752px">0</span></div>
<div class="gr"><div class="t"><i>EX-5500_70</i><i>101,804 м3</i><i>168 ч</i><i>285,535.3 тонн</i><i>Stockpiles/WRS*</i></div><span class="v" style="left:1446px">168 ч</span><b class="G" style="left:1448.5px;width:301px"></b></div>
<div><div class="t"><i>Pit/-60/52</i><i>2,986 м3</i><i>24 ч</i><i>8,541.8 тонн</i><i>Stockpiles/WRS*</i></div><span class="v" style="left:1446px">2,986 м3</span><b class="k" style="left:1448.5px;width:43px"></b><span class="n" style="left:1494px">3.2283845816604</span></div>
<div><div class="t"><i>Pit/-60/355</i><i>1,850 м3</i><i>24 ч</i><i>5,253.6 тонн</i><i>Stockpiles/WRS*</i></div><span class="v" style="left:1446px">1,850 м3</span><b class="k" style="left:1448.5px;width:43px"></b><span class="n" style="left:1494px">9.7846118872230</span></div>
<div><div class="t"><i>Pit/-60/72</i><i>2,336 м3</i><i>24 ч</i><i>6,592.1 тонн</i><i>Stockpiles/WRS*</i></div><span class="v" style="left:1446px">2,336 м3</span><b class="u" style="left:1448.5px;width:43px"></b><span class="n" style="left:1494px">17.706102680782</span></div>
<div><div class="t"><i>Pit/-60/60</i><i>627 м3</i><i>24 ч</i><i>1,793.6 тонн</i><i>Stockpiles/bednia_r</i></div><span class="v" style="left:1446px">627 м3</span><b class="g" style="left:1448.5px;width:43px"></b><span class="n" style="left:1494px">20.610545207077</span></div>
<div><div class="t"><i>Pit/-60/61</i><i>212 м3</i><i>24 ч</i><i>589.9 тонн</i><i>Stockpiles/WRS</i></div><span class="v" style="left:1446px">212 м3</span><b class="u" style="left:1448.5px;width:43px"></b><span class="n" style="left:1494px">15.052527041397</span></div>
<div><div class="t"><i>Pit/-60/N214</i><i>17,270 м3</i><i>96 ч</i><i>44,731.2 тонн</i><i>Stockpiles/WRS</i></div><span class="v" style="left:1446px">17,270 м3</span><b class="k" style="left:1448.5px;width:86px"></b><b class="k" style="left:1577.5px;width:43px"></b><span class="n" style="left:1623px">6.7607818612231</span></div>
<div><div class="t"><i>Pit/-60/106</i><i>1,261 м3</i><i>48 ч</i><i>3,627.1 тонн</i><i>Stockpiles/bednia_r</i></div><span class="v" style="left:1446px">1,261 м3</span><b class="g" style="left:1448.5px;width:43px"></b><b class="u" style="left:1491.5px;width:43px"></b><span class="n" style="left:1537px">21.628497330504</span></div>
<div><div class="t"><i>Pit/-60/49</i><i>226 м3</i><i>48 ч</i><i>646.1 тонн</i><i>Stockpiles/bednia_r</i></div><span class="v" style="left:1446px">226 м3</span><b class="g" style="left:1448.5px;width:43px"></b><b class="u" style="left:1491.5px;width:43px"></b><span class="n" style="left:1537px">20.432328699004</span></div>
<div><div class="t"><i>Pit/-60/117</i><i>1,214 м3</i><i>48 ч</i><i>3,502.2 тонн</i><i>Stockpiles/bednia_r</i></div><span class="v" style="left:1446px">1,214 м3</span><b class="g" style="left:1448.5px;width:86px"></b><span class="n" style="left:1537px">18.871303514473</span></div>
<div><div class="t"><i>Pit/-60/308</i><i>4,053 м3</i><i>48 ч</i><i>12,083.3 тонн</i><i>Stockpiles/bednia_r</i></div><span class="v" style="left:1489px">4,053 м3</span><b class="g" style="left:1491.5px;width:86px"></b><span class="n" style="left:1580px">25.714285630517</span></div>
<div><div class="t"><i>Pit/-60/312</i><i>1,135 м3</i><i>24 ч</i><i>3,460.7 тонн</i><i>Stockpiles/Ore*</i></div><span class="v" style="left:1489px">1,135 м3</span><b class="c" style="left:1491.5px;width:43px"></b><span class="n" style="left:1537px">28.436673305005</span></div>
<div><div class="t"><i>Pit/-60/47</i><i>259 м3</i><i>24 ч</i><i>782.9 тонн</i><i>Stockpiles/bednia_r</i></div><span class="v" style="left:1489px">259 м3</span><b class="g" style="left:1491.5px;width:43px"></b><span class="n" style="left:1537px">24.168809603187</span></div>
<div><div class="t"><i>Pit/-60/6</i><i>1,662 м3</i><i>24 ч</i><i>4,880.1 тонн</i><i>Stockpiles/bednia_r</i></div><span class="v" style="left:1489px">1,662 м3</span><b class="g" style="left:1491.5px;width:43px"></b><span class="n" style="left:1537px">26.320113847785</span></div>
<div><div class="t"><i>Pit/-60/42</i><i>3,166 м3</i><i>24 ч</i><i>9,406.8 тонн</i><i>Stockpiles/bednia_r</i></div><span class="v" style="left:1489px">3,166 м3</span><b class="g" style="left:1491.5px;width:43px"></b><span class="n" style="left:1537px">25.271712852080</span></div>
<div><div class="t"><i>Pit/-60/123</i><i>490 м3</i><i>24 ч</i><i>1,416.8 тонн</i><i>Stockpiles/bednia_r</i></div><span class="v" style="left:1489px">490 м3</span><b class="g" style="left:1491.5px;width:43px"></b><span class="n" style="left:1537px">14.975333507544</span></div>
<div><div class="t"><i>Pit/-60/46</i><i>3,164 м3</i><i>24 ч</i><i>9,332.6 тонн</i><i>Stockpiles/bednia_r</i></div><span class="v" style="left:1489px">3,164 м3</span><b class="g" style="left:1491.5px;width:43px"></b><span class="n" style="left:1537px">24.382938647350</span></div>
<div><div class="t"><i>Pit/-60/295</i><i>223 м3</i><i>72 ч</i><i>673.6 тонн</i><i>Dumps/d4/201/42*</i></div><span class="v" style="left:1532px">223 м3</span><b class="k" style="left:1534.5px;width:43px"></b><b class="c" style="left:1620.5px;width:43px"></b><span class="n" style="left:1666px">22.284717508150</span></div>
<div><div class="t"><i>Pit/-60/288</i><i>2,208 м3</i><i>48 ч</i><i>6,450.6 тонн</i><i>Stockpiles/bednia_r</i></div><span class="v" style="left:1532px">2,208 м3</span><b class="g" style="left:1534.5px;width:86px"></b><span class="n" style="left:1623px">14.668457828997</span></div>
<div><div class="t"><i>Pit/-60/N1214</i><i>765 м3</i><i>72 ч</i><i>2,315.7 тонн</i><i>Stockpiles/Ore*</i></div><span class="v" style="left:1532px">765 м3</span><b class="g" style="left:1534.5px;width:43px"></b><b class="c" style="left:1620.5px;width:43px"></b><span class="n" style="left:1666px">26.405747668177</span></div>
<div><div class="t"><i>Pit/-60/15</i><i>492 м3</i><i>72 ч</i><i>1,512.5 тонн</i><i>Stockpiles/Ore*</i></div><span class="v" style="left:1532px">492 м3</span><b class="k" style="left:1534.5px;width:43px"></b><b class="c" style="left:1620.5px;width:43px"></b><span class="n" style="left:1666px">29.321100115626</span></div>
<div><div class="t"><i>Pit/-60/257</i><i>125 м3</i><i>72 ч</i><i>382.7 тонн</i><i>Dumps/d4/201/42*</i></div><span class="v" style="left:1532px">125 м3</span><b class="k" style="left:1534.5px;width:43px"></b><b class="c" style="left:1620.5px;width:43px"></b><span class="n" style="left:1666px">5.6042820474065</span></div>
<div><div class="t"><i>Pit/-60/N1218</i><i>1,257 м3</i><i>48 ч</i><i>4,094.5 тонн</i><i>Stockpiles/Ore*</i></div><span class="v" style="left:1532px">1,257 м3</span><b class="u" style="left:1534.5px;width:43px"></b><b class="c" style="left:1577.5px;width:43px"></b><span class="n" style="left:1623px">35.081806128300</span></div>
<div><div class="t"><i>Pit/-60/297</i><i>5,894 м3</i><i>48 ч</i><i>16,971.8 тонн</i><i>Stockpiles/bednia_r</i></div><span class="v" style="left:1532px">5,894 м3</span><b class="g" style="left:1534.5px;width:43px"></b><b class="c" style="left:1577.5px;width:43px"></b><span class="n" style="left:1623px">24.541889594432</span></div>
<div><div class="t"><i>Pit/-60/300</i><i>2,801 м3</i><i>48 ч</i><i>8,515.0 тонн</i><i>Stockpiles/bednia_r</i></div><span class="v" style="left:1532px">2,801 м3</span><b class="g" style="left:1534.5px;width:43px"></b><b class="c" style="left:1577.5px;width:43px"></b><span class="n" style="left:1623px">28.075282850403</span></div>
<div><div class="t"><i>Pit/-60/302</i><i>359 м3</i><i>24 ч</i><i>1,116.2 тонн</i><i>Stockpiles/Ore*</i></div><span class="v" style="left:1532px">359 м3</span><b class="c" style="left:1534.5px;width:43px"></b><span class="n" style="left:1580px">30.822798690878</span></div>
<div><div class="t"><i>Pit/-60/307</i><i>2,904 м3</i><i>24 ч</i><i>8,769.0 тонн</i><i>Stockpiles/WRS_ore</i></div><span class="v" style="left:1532px">2,904 м3</span><b class="g" style="left:1534.5px;width:43px"></b><span class="n" style="left:1580px">27.242648332242</span></div>
<div><div class="t"><i>Pit/-60/121</i><i>2,224 м3</i><i>72 ч</i><i>6,654.0 тонн</i><i>Stockpiles/bednia_r</i></div><span class="v" style="left:1532px">2,224 м3</span><b class="g" style="left:1534.5px;width:43px"></b><b class="c" style="left:1577.5px;width:86px"></b><span class="n" style="left:1666px">25.353580428051</span></div>
<div><div class="t"><i>Pit/-60/105</i><i>3,341 м3</i><i>96 ч</i><i>10,041.5 тонн</i><i>Stockpiles/bednia_r</i></div><span class="v" style="left:1575px">3,341 м3</span><b class="g" style="left:1577.5px;width:86px"></b><b class="c" style="left:1706.5px;width:43px"></b><span class="n" style="left:1752px">24.373729427581</span></div>
<div><div class="t"><i>Pit/-60/109</i><i>2,125 м3</i><i>96 ч</i><i>6,613.5 тонн</i><i>Stockpiles/Ore*</i></div><span class="v" style="left:1575px">2,125 м3</span><b class="g" style="left:1577.5px;width:43px"></b><b class="c" style="left:1663.5px;width:86px"></b><span class="n" style="left:1752px">30.870117658380</span></div>
<div><div class="t"><i>Pit/-60/N2168</i><i>28,220 м3</i><i>96 ч</i><i>73,117.9 тонн</i><i>Stockpiles/WRS</i></div><span class="v" style="left:1575px">28,220 м3</span><b class="k" style="left:1577.5px;width:172px"></b><span class="n" style="left:1752px">6.8822179535534</span></div>
<div><div class="t"><i>Pit/-60/68</i><i>1,021 м3</i><i>24 ч</i><i>2,939.2 тонн</i><i>Stockpiles/WRS</i></div><span class="v" style="left:1575px">1,021 м3</span><b class="k" style="left:1577.5px;width:43px"></b><span class="n" style="left:1623px">0.2436727489465</span></div>
<div><div class="t"><i>Pit/-60/38</i><i>347 м3</i><i>72 ч</i><i>1,113.0 тонн</i><i>Stockpiles/Ore*</i></div><span class="v" style="left:1575px">347 м3</span><b class="g" style="left:1577.5px;width:43px"></b><b class="c" style="left:1620.5px;width:86px"></b><span class="n" style="left:1709px">34.227404001201</span></div>
<div><div class="t"><i>Pit/-60/319</i><i>1,014 м3</i><i>48 ч</i><i>3,119.2 тонн</i><i>Stockpiles/bednia_r</i></div><span class="v" style="left:1575px">1,014 м3</span><b class="g" style="left:1577.5px;width:86px"></b><span class="n" style="left:1666px">29.470311616658</span></div>
<div><div class="t"><i>Pit/-60/320</i><i>118 м3</i><i>24 ч</i><i>380.3 тонн</i><i>Stockpiles/bednia_r</i></div><span class="v" style="left:1575px">118 м3</span><b class="g" style="left:1577.5px;width:43px"></b><span class="n" style="left:1623px">28.527732157062</span></div>
<div><div class="t"><i>Pit/-60/329</i><i>723 м3</i><i>48 ч</i><i>2,217.8 тонн</i><i>Stockpiles/bednia_r</i></div><span class="v" style="left:1575px">723 м3</span><b class="g" style="left:1577.5px;width:86px"></b><span class="n" style="left:1666px">29.061635162898</span></div>
<div><div class="t"><i>Pit/-60/330</i><i>336 м3</i><i>24 ч</i><i>1,018.8 тонн</i><i>Stockpiles/bednia_r</i></div><span class="v" style="left:1575px">336 м3</span><b class="g" style="left:1577.5px;width:43px"></b><span class="n" style="left:1623px">25.537597941300</span></div>
<div><div class="t"><i>Pit/-60/306</i><i>745 м3</i><i>48 ч</i><i>2,343.0 тонн</i><i>Stockpiles/Ore*</i></div><span class="v" style="left:1575px">745 м3</span><b class="g" style="left:1577.5px;width:86px"></b><span class="n" style="left:1666px">32.129100609181</span></div>
<div><div class="t"><i>Pit/-60/193</i><i>2,459 м3</i><i>72 ч</i><i>7,179.3 тонн</i><i>Stockpiles/bednia_r</i></div><span class="v" style="left:1618px">2,459 м3</span><b class="g" style="left:1620.5px;width:43px"></b><b class="k" style="left:1706.5px;width:43px"></b><span class="n" style="left:1752px">21.760888129314</span></div>
<div><div class="t"><i>Pit/-60/380</i><i>412 м3</i><i>24 ч</i><i>1,305.3 тонн</i><i>Stockpiles/Ore</i></div><span class="v" style="left:1618px">412 м3</span><b class="c" style="left:1620.5px;width:43px"></b><span class="n" style="left:1666px">32.810993046038</span></div>
<div class="gr"><div class="t"><i>EX-5000_71</i><i>41,116 м3</i><i>168 ч</i><i>118,157.6 тонн</i><i>Stockpiles/WRS*</i></div><span class="v" style="left:1446px">168 ч</span><b class="T" style="left:1448.5px;width:301px"></b></div>
<div><div class="t"><i>Pit/-225/4</i><i>1,146 м3</i><i>24 ч</i><i>3,099.1 тонн</i><i>Stockpiles/VK_120*</i></div><span class="v" style="left:1446px">1,146 м3</span><b class="k" style="left:1448.5px;width:43px"></b><span class="n" style="left:1494px">0</span></div>
<div><div class="t"><i>Pit/-225/N2158</i><i>286 м3</i><i>24 ч</i><i>841.5 тонн</i><i>Stockpiles/Ore*</i></div><span class="v" style="left:1446px">286 м3</span><b class="c" style="left:1448.5px;width:43px"></b><span class="n" style="left:1494px">22.239872406661</span></div>
<div><div class="t"><i>Pit/-225/3</i><i>785 м3</i><i>24 ч</i><i>2,109.0 тонн</i><i>Stockpiles/WRS*</i></div><span class="v" style="left:1446px">785 м3</span><b class="k" style="left:1448.5px;width:43px"></b><span class="n" style="left:1494px">0</span></div>
<div><div class="t"><i>Pit/-225/N215A</i><i>4,193 м3</i><i>24 ч</i><i>11,192.1 тонн</i><i>Stockpiles/WRS*</i></div><span class="v" style="left:1446px">4,193 м3</span><b class="k" style="left:1448.5px;width:43px"></b><span class="n" style="left:1494px">10.871590403451</span></div>
<div><div class="t"><i>Pit/-225/2</i><i>711 м3</i><i>24 ч</i><i>1,906.7 тонн</i><i>Stockpiles/WRS</i></div><span class="v" style="left:1446px">711 м3</span><b class="k" style="left:1448.5px;width:43px"></b><span class="n" style="left:1494px">0</span></div>
<div><div class="t"><i>Pit/-225/48</i><i>1,799 м3</i><i>144 ч</i><i>5,547.3 тонн</i><i>Stockpiles/Ore*</i></div><span class="v" style="left:1446px">1,799 м3</span><b class="g" style="left:1448.5px;width:86px"></b><b class="c" style="left:1534.5px;width:172px"></b><span class="n" style="left:1709px">29.719961063658</span></div>
<div><div class="t"><i>Pit/-225/47</i><i>1,608 м3</i><i>48 ч</i><i>4,958.5 тонн</i><i>Stockpiles/Ore</i></div><span class="v" style="left:1446px">1,608 м3</span><b class="c" style="left:1448.5px;width:43px"></b><b class="g" style="left:1491.5px;width:43px"></b><span class="n" style="left:1537px">29.763553344164</span></div>
<div><div class="t"><i>Pit/-225/N215</i><i>28,848 м3</i><i>168 ч</i><i>83,442.6 тонн</i><i>Stockpiles/WRS</i></div><span class="v" style="left:1446px">28,848 м3</span><b class="k" style="left:1448.5px;width:301px"></b><span class="n" style="left:1752px">12.82209858</span></div>
<div><div class="t"><i>Pit/-225/87</i><i>801 м3</i><i>72 ч</i><i>2,179.1 тонн</i><i>Stockpiles/WRS</i></div><span class="v" style="left:1489px">801 м3</span><b class="k" style="left:1491.5px;width:43px"></b><b class="k" style="left:1577.5px;width:43px"></b><span class="n" style="left:1623px">0</span></div>
<div><div class="t"><i>Pit/-225/81</i><i>938 м3</i><i>48 ч</i><i>2,880.8 тонн</i><i>Stockpiles/Ore</i></div><span class="v" style="left:1661px">938 м3</span><b class="g" style="left:1663.5px;width:86px"></b><span class="n" style="left:1752px">29.318207094907</span></div>
<div class="gr"><div class="t"><i>EX-3600_72</i><i>69,101 м3</i><i>168 ч</i><i>201,098.6 тонн</i><i>Stockpiles/Ore*</i></div><span class="v" style="left:1446px">168 ч</span><b class="M" style="left:1448.5px;width:301px"></b></div>
<div><div class="t"><i>Pit/-120/23</i><i>675 м3</i><i>24 ч</i><i>1,945.1 тонн</i><i>Dumps/d4/201/331</i></div><span class="v" style="left:1446px">675 м3</span><b class="k" style="left:1448.5px;width:43px"></b><span class="n" style="left:1494px">0.0033671362257</span></div>
<div><div class="t"><i>Pit/-120/54</i><i>960 м3</i><i>24 ч</i><i>2,813.3 тонн</i><i>Dumps/d4/201/331</i></div><span class="v" style="left:1446px">960 м3</span><b class="k" style="left:1448.5px;width:43px"></b><span class="n" style="left:1494px">10.388736003567</span></div>
<div><div class="t"><i>Pit/-120/53</i><i>397 м3</i><i>24 ч</i><i>1,187.5 тонн</i><i>Stockpiles/bednia_r</i></div><span class="v" style="left:1446px">397 м3</span><b class="g" style="left:1448.5px;width:43px"></b><span class="n" style="left:1494px">21.641442979973</span></div>
<div><div class="t"><i>Pit/-120/51</i><i>213 м3</i><i>24 ч</i><i>643.1 тонн</i><i>Stockpiles/bednia_r</i></div><span class="v" style="left:1446px">213 м3</span><b class="g" style="left:1448.5px;width:43px"></b><span class="n" style="left:1494px">27.298315797858</span></div>
<div><div class="t"><i>Pit/-120/N188</i><i>8,804 м3</i><i>120 ч</i><i>26,552.6 тонн</i><i>Stockpiles/bednia_r</i></div><span class="v" style="left:1446px">8,804 м3</span><b class="g" style="left:1448.5px;width:86px"></b><b class="k" style="left:1534.5px;width:43px"></b><b class="u" style="left:1577.5px;width:86px"></b><span class="n" style="left:1666px">21.470490835255</span></div>
<div><div class="t"><i>Pit/-120/17</i><i>2,436 м3</i><i>24 ч</i><i>6,552.3 тонн</i><i>Dumps/d4/201/331</i></div><span class="v" style="left:1446px">2,436 м3</span><b class="k" style="left:1448.5px;width:43px"></b><span class="n" style="left:1494px">2.8124323601836</span></div>
<div><div class="t"><i>Pit/-120/16</i><i>9,881 м3</i><i>72 ч</i><i>28,876.4 тонн</i><i>Stockpiles/Ore*</i></div><span class="v" style="left:1446px">9,881 м3</span><b class="k" style="left:1448.5px;width:86px"></b><b class="g" style="left:1534.5px;width:43px"></b><span class="n" style="left:1580px">9.1203485645063</span></div>
<div><div class="t"><i>Pit/-120/5</i><i>4,996 м3</i><i>72 ч</i><i>14,420.3 тонн</i><i>Dumps/d4/201/42*</i></div><span class="v" style="left:1532px">4,996 м3</span><b class="k" style="left:1534.5px;width:86px"></b><b class="g" style="left:1620.5px;width:43px"></b><span class="n" style="left:1666px">1.2119342528688</span></div>
<div><div class="t"><i>Pit/-120/2</i><i>1,690 м3</i><i>48 ч</i><i>4,869.6 тонн</i><i>Dumps/d4/201/36*</i></div><span class="v" style="left:1532px">1,690 м3</span><b class="k" style="left:1534.5px;width:43px"></b><b class="g" style="left:1577.5px;width:43px"></b><span class="n" style="left:1623px">0.3303060923534</span></div>
<div><div class="t"><i>Pit/-120/18</i><i>3,186 м3</i><i>48 ч</i><i>9,580.9 тонн</i><i>Stockpiles/Ore*</i></div><span class="v" style="left:1532px">3,186 м3</span><b class="g" style="left:1534.5px;width:86px"></b><span class="n" style="left:1623px">24.072218157205</span></div>
<div><div class="t"><i>Pit/-120/20</i><i>204 м3</i><i>24 ч</i><i>628.5 тонн</i><i>Stockpiles/bednia_r</i></div><span class="v" style="left:1575px">204 м3</span><b class="g" style="left:1577.5px;width:43px"></b><span class="n" style="left:1623px">29.451463121590</span></div>
<div><div class="t"><i>Pit/-120/10</i><i>10,129 м3</i><i>96 ч</i><i>30,645.0 тонн</i><i>Stockpiles/Ore*</i></div><span class="v" style="left:1575px">10,129 м3</span><b class="g" style="left:1577.5px;width:43px"></b><b class="k" style="left:1620.5px;width:43px"></b><b class="g" style="left:1663.5px;width:86px"></b><span class="n" style="left:1752px">23.610390950615</span></div>
<div><div class="t"><i>Pit/-120/8</i><i>7,492 м3</i><i>96 ч</i><i>21,993.4 тонн</i><i>Stockpiles/bednia_r</i></div><span class="v" style="left:1575px">7,492 м3</span><b class="k" style="left:1577.5px;width:43px"></b><b class="g" style="left:1620.5px;width:86px"></b><b class="k" style="left:1706.5px;width:43px"></b><span class="n" style="left:1752px">9.1793008776979</span></div>
<div><div class="t"><i>Pit/-120/9</i><i>14,271 м3</i><i>72 ч</i><i>41,100.9 тонн</i><i>Dumps/d4/201/35*</i></div><span class="v" style="left:1618px">14,271 м3</span><b class="k" style="left:1620.5px;width:129px"></b><span class="n" style="left:1752px">0</span></div>
<div><div class="t"><i>Pit/-120/12</i><i>102 м3</i><i>24 ч</i><i>294.7 тонн</i><i>Dumps/d4/201/54</i></div><span class="v" style="left:1704px">102 м3</span><b class="k" style="left:1706.5px;width:43px"></b><span class="n" style="left:1752px">0</span></div>
<div><div class="t"><i>Pit/-120/15</i><i>98 м3</i><i>24 ч</i><i>276.3 тонн</i><i>Dumps/d4/201/54</i></div><span class="v" style="left:1704px">98 м3</span><b class="k" style="left:1706.5px;width:43px"></b><span class="n" style="left:1752px">0</span></div>
<div><div class="t"><i>Pit/-120/1</i><i>3,508 м3</i><i>24 ч</i><i>9,318.6 тонн</i><i>Dumps/d4/201/22*</i></div><span class="v" style="left:1704px">3,508 м3</span><b class="k" style="left:1706.5px;width:43px"></b><span class="n" style="left:1752px">0</span></div>
<div class="gr"><div class="t"><i>EX-3500_79</i><i>64,183 м3</i><i>168 ч</i><i>118,148.4 тонн</i><i>Dumps/d4/201/331</i></div><span class="v" style="left:1446px">168 ч</span><b class="O" style="left:1448.5px;width:301px"></b></div>
<div><div class="t"><i>Pit/15/147</i><i>2,063 м3</i><i>24 ч</i><i>3,795.6 тонн</i><i>Dumps/d4/201/331</i></div><span class="v" style="left:1446px">2,063 м3</span><b class="l" style="left:1448.5px;width:43px"></b><span class="n" style="left:1494px">0</span></div>
<div><div class="t"><i>Pit/15/146</i><i>2,118 м3</i><i>24 ч</i><i>3,897.7 тонн</i><i>Dumps/d4/201/331</i></div><span class="v" style="left:1446px">2,118 м3</span><b class="l" style="left:1448.5px;width:43px"></b><span class="n" style="left:1494px">0</span></div>
<div><div class="t"><i>Pit/15/145</i><i>2,300 м3</i><i>24 ч</i><i>4,232.7 тонн</i><i>Dumps/d4/201/331</i></div><span class="v" style="left:1446px">2,300 м3</span><b class="l" style="left:1448.5px;width:43px"></b><span class="n" style="left:1494px">0</span></div>
<div><div class="t"><i>Pit/15/144</i><i>746 м3</i><i>24 ч</i><i>1,372.8 тонн</i><i>Dumps/d4/201/331</i></div><span class="v" style="left:1446px">746 м3</span><b class="l" style="left:1448.5px;width:43px"></b><span class="n" style="left:1494px">0</span></div>
</div>

<svg class="a" style="left:0;top:0" width="1800" height="806">
<polygon points="1003,755 925,788 1094,755" fill="#fff" stroke="#e00000" stroke-width="3" stroke-linejoin="miter"/>
</svg>
<div class="a" style="left:933px;top:722px;width:306px;height:31px;background:#fff;border:2px solid #e00000;box-shadow:2px 2px 2px rgba(0,0,0,.35)"></div>
<svg class="a" style="left:0;top:0" width="1800" height="806">
<polygon points="1006,754 928,786 1091,754" fill="#fff"/>
</svg>
<div class="a" style="left:952px;top:731px;font-size:11.6px;font-weight:bold;color:#111;white-space:nowrap;letter-spacing:-0.2px">Data loss caused by custom display settings</div>
</body></html>
